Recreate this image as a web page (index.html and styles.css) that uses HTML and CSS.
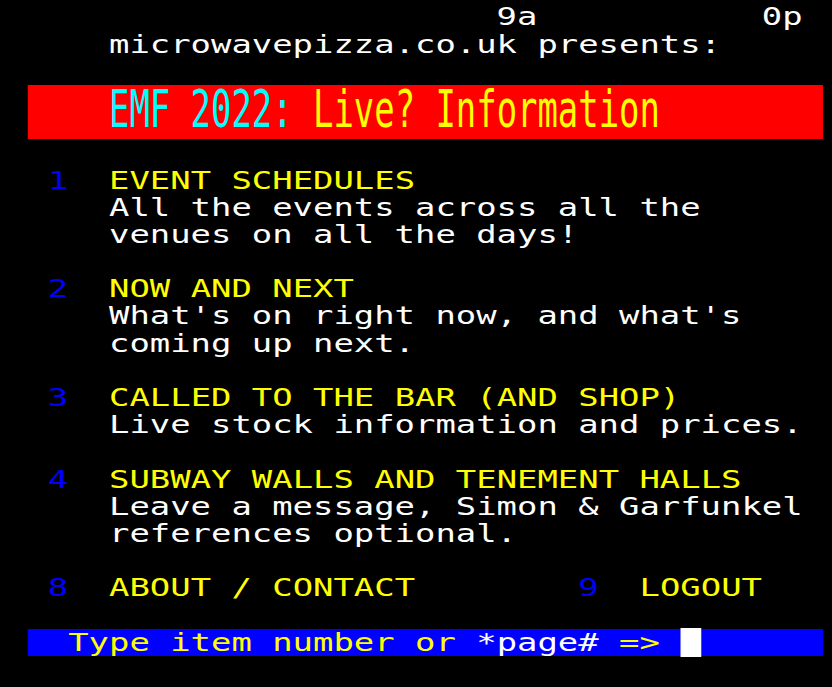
FILE: index.html
```html
<!DOCTYPE html>
<html lang="en">
<head>
<meta charset="utf-8">
<title>EMF 2022: Live? Information</title>
<link rel="stylesheet" href="styles.css">
</head>
<body>
<div class="screen">
<div class="row">                        9a           0p</div>
<div class="row">     microwavepizza.co.uk presents:</div>
<div class="row"> </div>
<div class="row dbl band-red"><span class="dbl-text">    <span class="cyan">EMF 2022:</span> <span class="yellow">Live? Information</span></span></div>
<div class="row"> </div>
<div class="row">  <span class="blue">1</span>  <span class="yellow">EVENT SCHEDULES</span></div>
<div class="row">     All the events across all the</div>
<div class="row">     venues on all the days!</div>
<div class="row"> </div>
<div class="row">  <span class="blue">2</span>  <span class="yellow">NOW AND NEXT</span></div>
<div class="row">     What's on right now, and what's</div>
<div class="row">     coming up next.</div>
<div class="row"> </div>
<div class="row">  <span class="blue">3</span>  <span class="yellow">CALLED TO THE BAR (AND SHOP)</span></div>
<div class="row">     Live stock information and prices.</div>
<div class="row"> </div>
<div class="row">  <span class="blue">4</span>  <span class="yellow">SUBWAY WALLS AND TENEMENT HALLS</span></div>
<div class="row">     Leave a message, Simon &amp; Garfunkel</div>
<div class="row">     references optional.</div>
<div class="row"> </div>
<div class="row">  <span class="blue">8</span>  <span class="yellow">ABOUT / CONTACT</span>        <span class="blue">9</span>  <span class="yellow">LOGOUT</span></div>
<div class="row"> </div>
<div class="row band-blue">  <span class="yellow">Type item number or </span>*page#<span class="yellow"> =&gt;</span> <span class="cursor"> </span></div>
</div>
</body>
</html>
```
FILE: styles.css
```css
html, body {
  margin: 0;
  padding: 0;
  background: #000;
  height: 687px;
  overflow: hidden;
}

.screen {
  width: 40ch;
  margin: 3.4px 0 0 7px;
  font-family: "DejaVu Sans Mono", monospace;
  font-size: 24.5px;
  line-height: 27.2px;
  color: #fff;
  transform: scaleX(1.383);
  transform-origin: 0 0;
}

.row {
  height: 27.2px;
  white-space: pre;
}

.dbl {
  height: 54.4px;
}

.dbl-text {
  display: inline-block;
  transform: scaleY(2.07);
  transform-origin: 0 3.45px;
}

.band-red {
  background: #ff0000;
  margin-left: 1ch;
  width: 39ch;
}

.band-blue {
  background: #0000ff;
  margin-left: 1ch;
  width: 39ch;
}

.cyan { color: #00ffff; }
.yellow { color: #ffff00; }
.blue { color: #0000ff; }

.cursor {
  background: #fff;
}
```
